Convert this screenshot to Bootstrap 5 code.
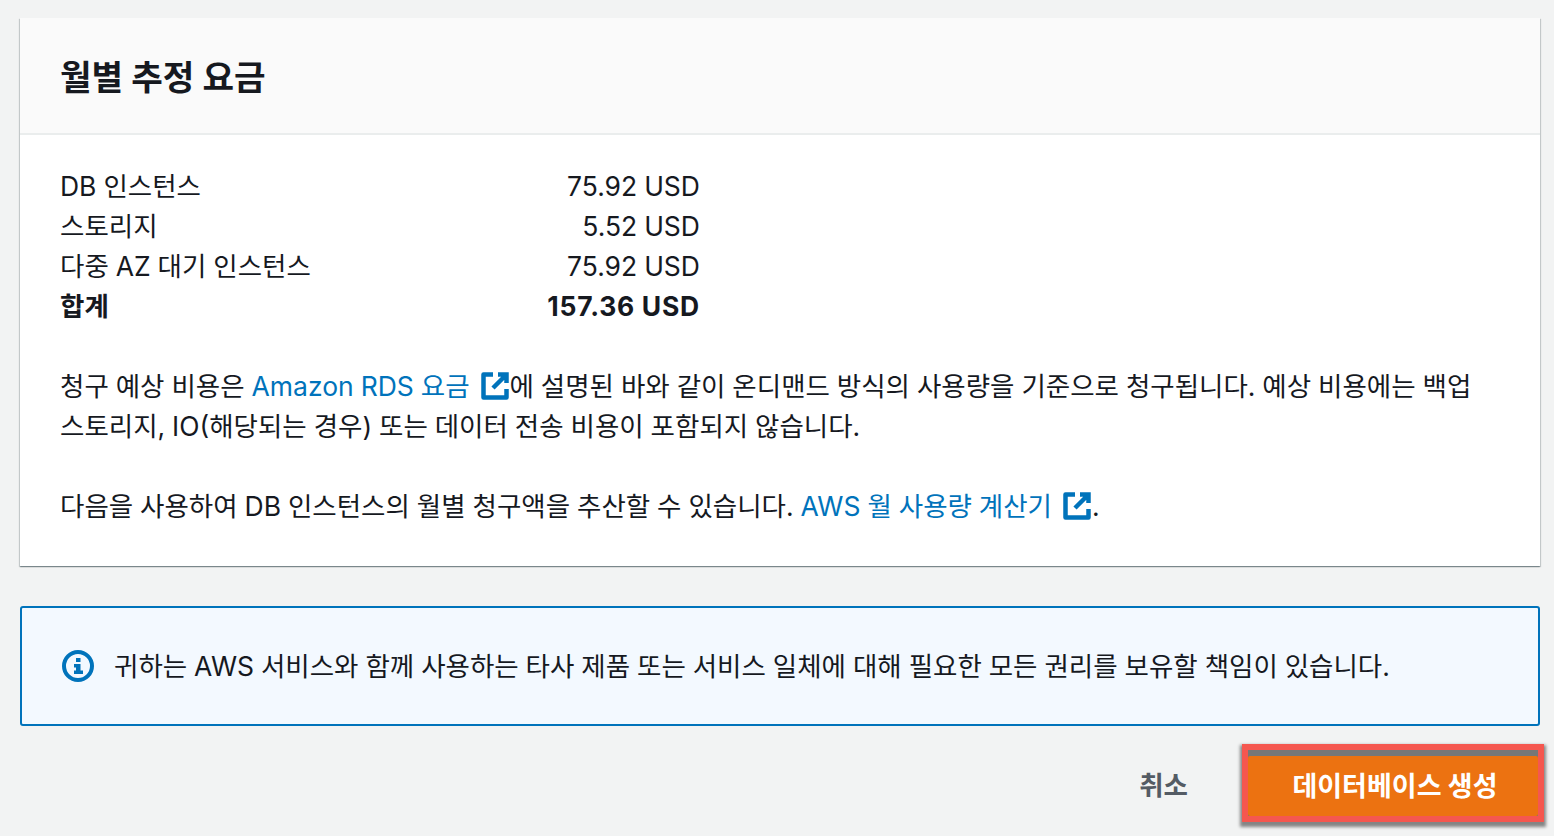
<!DOCTYPE html>
<html lang="ko">
  <head>
    <meta charset="UTF-8" />
    <meta name="viewport" content="width=device-width, initial-scale=1.0" />
    <title>월별 추정 요금</title>
    <link href="https://cdn.jsdelivr.net/npm/bootstrap@5.3.0/dist/css/bootstrap.min.css" rel="stylesheet" />
    <style>
      html, body { height: 836px; overflow: hidden; }
      body {
        background: #f2f3f3;
        color: #16191f;
        font-family: Inter, "Noto Sans CJK KR", sans-serif;
        font-size: 26.5px;
        line-height: 40px;
        word-spacing: -0.5px;
        padding: 18px 14px 0 20px;
      }
      .cost-panel { background: #fff; box-shadow: 0 1px 1px 0 rgba(0,28,36,.3), 1px 1px 1px 0 rgba(0,28,36,.15), -1px 1px 1px 0 rgba(0,28,36,.15); }
      .cost-head { height: 117px; padding: 4px 40px 0; background: #fafafa; border-bottom: 2px solid #eaeded; }
      .cost-head h2 { font-size: 34.3px; font-weight: 700; margin: 0; font-family: inherit; word-spacing: 0; }
      .cost-body { padding: 31px 40px 40px; height: 431px; }
      .cost-line { width: 640px; }
      .total-amount { letter-spacing: .8px; }
      .cost-para { margin: 40px 0 0; }
      .aws-link { color: #0073bb; text-decoration: none; }
      .ext-icon { width: 30px; height: 30px; vertical-align: -5px; margin-left: 3px; }
      .info-box { margin-top: 40px; height: 120px; background: #f3f9ff; border: 2px solid #0073bb; border-radius: 3px; padding: 0 40px; gap: 20px; }
      .info-box svg { flex: none; }
      .foot-bar { margin: 18px -4px 0 0; }
      .cancel-link { color: #545b64; font-weight: 700; margin: 4px 54px 0 0; }
      .callout { width: 302px; height: 78px; border: 6px solid #f5574f; background: #777; box-shadow: 0 3px 3px 2px rgba(0,0,0,.45); }
      .create-btn { display: block; width: 290px; height: 60px; margin-top: 6px; background: #ec7211; color: #fff; font-weight: 700; font-size: 27px; line-height: 1; border: 0; border-radius: 2px; padding: 0 0 0 4px; }
    </style>
  </head>
  <body>
    <div class="cost-panel">
      <div class="cost-head d-flex align-items-center">
        <h2>월별 추정 요금</h2>
      </div>
      <div class="cost-body">
        <div class="cost-line d-flex justify-content-between"><span>DB 인스턴스</span><span>75.92 USD</span></div>
        <div class="cost-line d-flex justify-content-between"><span>스토리지</span><span>5.52 USD</span></div>
        <div class="cost-line d-flex justify-content-between"><span>다중 AZ 대기 인스턴스</span><span>75.92 USD</span></div>
        <div class="cost-line d-flex justify-content-between fw-bold"><span>합계</span><span class="total-amount">157.36 USD</span></div>
        <p class="cost-para">청구 예상 비용은 <a class="aws-link" href="#">Amazon RDS 요금 <svg class="ext-icon" viewBox="0 0 30 30" fill="none" stroke="#0073bb" stroke-width="4.500"><path d="M13 3.500H3.500v23h23V18" stroke-linejoin="round"/><path d="M18 3.500h8.500V12M26 4 13 17"/></svg></a>에 설명된 바와 같이 온디맨드 방식의 사용량을 기준으로 청구됩니다. 예상 비용에는 백업 스토리지, IO(해당되는 경우) 또는 데이터 전송 비용이 포함되지 않습니다.</p>
        <p class="cost-para">다음을 사용하여 DB 인스턴스의 월별 청구액을 추산할 수 있습니다. <a class="aws-link" href="#">AWS 월 사용량 계산기 <svg class="ext-icon" viewBox="0 0 30 30" fill="none" stroke="#0073bb" stroke-width="4.500"><path d="M13 3.500H3.500v23h23V18" stroke-linejoin="round"/><path d="M18 3.500h8.500V12M26 4 13 17"/></svg></a>.</p>
      </div>
    </div>
    <div class="info-box d-flex align-items-center">
      <svg width="32" height="32" viewBox="0 0 32 32"><circle cx="16" cy="16" r="14" fill="none" stroke="#0073bb" stroke-width="4"/><rect x="14" y="8" width="4.500" height="4" fill="#0073bb"/><path d="M12 14h6.500v6.500H21V24h-9v-3.500h2V17.500h-2z" fill="#0073bb"/></svg>
      <span>귀하는 AWS 서비스와 함께 사용하는 타사 제품 또는 서비스 일체에 대해 필요한 모든 권리를 보유할 책임이 있습니다.</span>
    </div>
    <div class="foot-bar d-flex justify-content-end align-items-center">
      <a class="cancel-link text-decoration-none" href="#">취소</a>
      <div class="callout">
        <button class="btn create-btn" type="button">데이터베이스 생성</button>
      </div>
    </div>
    <script src="https://cdn.jsdelivr.net/npm/bootstrap@5.3.0/dist/js/bootstrap.bundle.min.js"></script>
  </body>
</html>
